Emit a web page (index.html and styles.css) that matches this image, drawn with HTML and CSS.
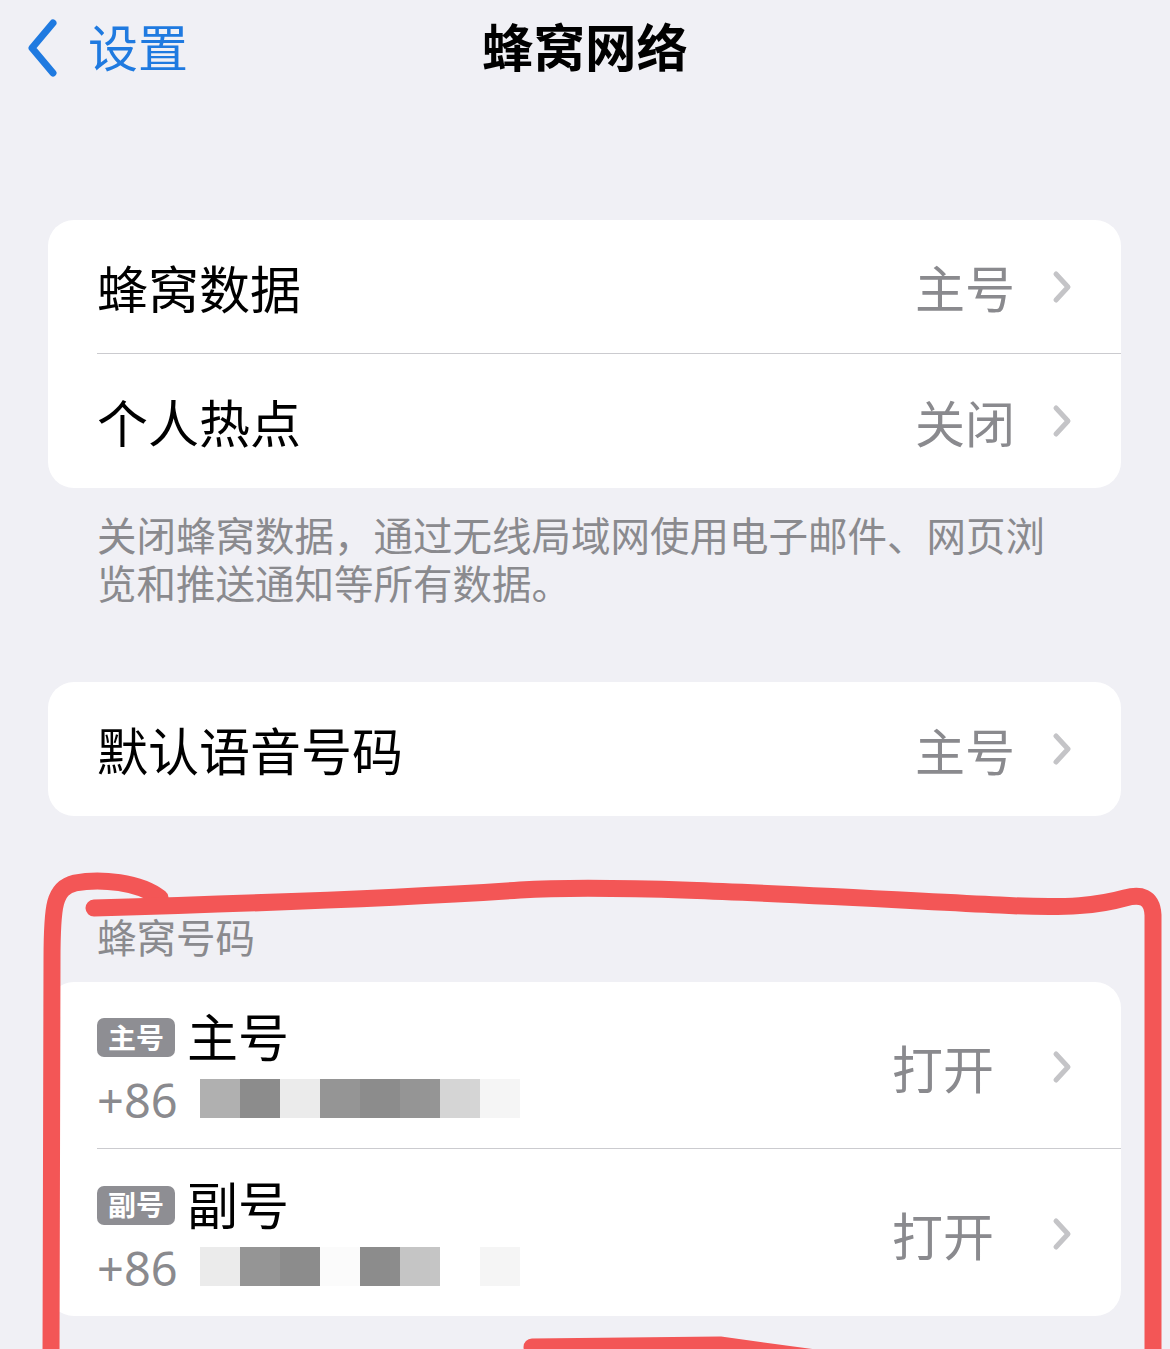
FILE: index.html
```html
<!DOCTYPE html>
<html lang="zh-CN">
<head>
    <meta charset="UTF-8">
    <meta name="viewport" content="width=device-width, initial-scale=1.0">
    <title>蜂窝网络</title>
    <link rel="stylesheet" href="styles.css">
</head>
<body>
    <div class="screen">
        <!-- Navigation bar -->
        <header class="nav">
            <a class="nav-back" href="#">
                <svg viewBox="0 0 30 58"><path d="M25 4 L4 29 L25 54" /></svg>
                <span>设置</span>
            </a>
            <h1 class="nav-title">蜂窝网络</h1>
            <span></span>
        </header>

        <main class="content">
            <!-- Data + hotspot -->
            <section class="group">
                <div class="cell">
                    <div class="cell-body">
                        <span class="cell-title">蜂窝数据</span>
                        <span class="cell-value">主号</span>
                        <svg class="chevron" viewBox="0 0 20 34"><path d="M4 4 L16 17 L4 30" /></svg>
                    </div>
                </div>
                <div class="cell">
                    <div class="cell-body">
                        <span class="cell-title">个人热点</span>
                        <span class="cell-value">关闭</span>
                        <svg class="chevron" viewBox="0 0 20 34"><path d="M4 4 L16 17 L4 30" /></svg>
                    </div>
                </div>
            </section>
            <p class="group-footer">关闭蜂窝数据，通过无线局域网使用电子邮件、网页浏览和推送通知等所有数据。</p>

            <!-- Default voice line -->
            <section class="group group-voice">
                <div class="cell">
                    <div class="cell-body">
                        <span class="cell-title">默认语音号码</span>
                        <span class="cell-value">主号</span>
                        <svg class="chevron" viewBox="0 0 20 34"><path d="M4 4 L16 17 L4 30" /></svg>
                    </div>
                </div>
            </section>

            <!-- SIM lines -->
            <h2 class="group-header">蜂窝号码</h2>
            <section class="group">
                <div class="cell">
                    <div class="cell-body sim-body">
                        <div class="sim-info">
                            <div class="sim-name-line">
                                <span class="sim-badge">主号</span>
                                <span class="sim-name">主号</span>
                            </div>
                            <div class="sim-number-line">
                                <span class="sim-cc">+86</span>
                                <div class="pixels">
                                    <i class="px g3"></i><i class="px g1"></i><i class="px g5"></i><i class="px g2"></i>
                                    <i class="px g1"></i><i class="px g2"></i><i class="px g4"></i><i class="px g6"></i>
                                </div>
                            </div>
                        </div>
                        <span class="cell-value sim-state">打开</span>
                        <svg class="chevron" viewBox="0 0 20 34"><path d="M4 4 L16 17 L4 30" /></svg>
                    </div>
                </div>
                <div class="cell">
                    <div class="cell-body sim-body">
                        <div class="sim-info">
                            <div class="sim-name-line">
                                <span class="sim-badge">副号</span>
                                <span class="sim-name">副号</span>
                            </div>
                            <div class="sim-number-line">
                                <span class="sim-cc">+86</span>
                                <div class="pixels">
                                    <i class="px g5"></i><i class="px g2"></i><i class="px g1"></i><i class="px g7"></i>
                                    <i class="px g1"></i><i class="px g4b"></i><i class="px"></i><i class="px g6"></i>
                                </div>
                            </div>
                        </div>
                        <span class="cell-value sim-state">打开</span>
                        <svg class="chevron" viewBox="0 0 20 34"><path d="M4 4 L16 17 L4 30" /></svg>
                    </div>
                </div>
            </section>
        </main>

        <!-- Hand-drawn highlight over the SIM section -->
        <svg class="markup" viewBox="0 0 1170 1349">
            <path d="M51 1360 L52 960 C52 905 54 888 75 883 C100 878 140 882 160 898" />
            <path d="M94 908 C200 905 400 898 520 890 C620 884 800 895 1000 905 C1070 909 1100 905 1125 898 C1140 894 1152 896 1153 915 L1153 1360" />
            <path d="M532 1347 L720 1345 L830 1360" />
        </svg>
    </div>
</body>
</html>
```

FILE: styles.css
```css
/* Reset */
* {
    margin: 0;
    padding: 0;
    box-sizing: border-box;
}

body {
    font-family: "Noto Sans", "Noto Sans CJK SC", sans-serif;
    background-color: #f0f0f5; /* grouped background */
    color: #000;
    overflow: hidden;
}

.screen {
    position: relative;
    min-height: 1349px;
}

/* Navigation bar */
.nav {
    display: grid;
    grid-template-columns: 1fr auto 1fr;
    align-items: center;
    height: 96px;
}

.nav-back {
    display: flex;
    align-items: center;
    padding-left: 28px;
    color: #1f7ae0;
    font-size: 50px;
    line-height: 1;
    text-decoration: none;
}

.nav-back svg {
    width: 30px;
    height: 58px;
    margin-right: 30px;
    fill: none;
    stroke: #1f7ae0;
    stroke-width: 7;
    stroke-linecap: round;
    stroke-linejoin: round;
}

.nav-title {
    font-size: 51.5px;
    font-weight: 700;
    line-height: 1;
}

/* Grouped list */
.content {
    padding: 124px 49px 0 48px;
}

.group {
    background: #fff;
    border-radius: 26px;
    overflow: hidden;
}

.group-voice {
    margin-top: 74px;
}

.cell {
    padding-left: 49px;
}

.cell-body {
    display: flex;
    align-items: center;
    height: 134px;
    padding-right: 49px;
    border-bottom: 1px solid #cbcbcf;
}

.cell:last-child .cell-body {
    border-bottom: none;
}

.cell-title {
    flex: 1;
    padding-top: 5px;
    font-size: 51px;
    line-height: 1;
}

.cell-value {
    padding-top: 5px;
    font-size: 50px;
    line-height: 1;
    color: #8a8a8e;
    margin-right: 37px;
}

.chevron {
    width: 20px;
    height: 34px;
    fill: none;
    stroke: #c4c4c7;
    stroke-width: 5;
    stroke-linecap: round;
    stroke-linejoin: round;
}

.group-footer {
    padding: 24px 59px 0 49px;
    font-size: 39.5px;
    line-height: 48px;
    color: #8a8a8e;
}

.group-header {
    margin-top: 98px;
    margin-bottom: 20px;
    padding-left: 49px;
    font-size: 39.5px;
    font-weight: 400;
    line-height: 48px;
    color: #8a8a8e;
}

/* SIM rows */
.sim-body {
    height: 167px;
    padding-top: 3px;
}

.sim-info {
    flex: 1;
    display: flex;
    flex-direction: column;
    gap: 18px;
}

.sim-name-line {
    display: flex;
    align-items: center;
    height: 46px;
}

.sim-badge {
    display: flex;
    align-items: center;
    justify-content: center;
    width: 78px;
    height: 39px;
    margin-right: 12px;
    border-radius: 7px;
    background: #8e8e93;
    color: #fff;
    font-size: 28px;
    font-weight: 700;
    line-height: 1;
}

.sim-name {
    font-size: 51px;
    line-height: 1;
}

.sim-number-line {
    display: flex;
    align-items: center;
    height: 40px;
}

.sim-cc {
    width: 103px;
    padding-top: 4px;
    font-size: 47px;
    line-height: 1;
    color: #8a8a8e;
}

.sim-state {
    font-size: 51px;
    margin-right: 58px;
}

/* Mosaic covering the phone number */
.pixels {
    display: flex;
}

.px {
    display: block;
    width: 40px;
    height: 39px;
}

.g1 { background: #8c8c8c; }
.g2 { background: #959595; }
.g3 { background: #b0b0b0; }
.g4 { background: #d5d5d5; }
.g4b { background: #c5c5c5; }
.g5 { background: #ebebeb; }
.g6 { background: #f5f5f5; }
.g7 { background: #fbfbfb; }

/* Red pen annotation */
.markup {
    position: absolute;
    top: 0;
    left: 0;
    width: 1170px;
    height: 1349px;
    pointer-events: none;
    fill: none;
    stroke: #f35656;
    stroke-width: 17;
    stroke-linecap: round;
    stroke-linejoin: round;
}
```
